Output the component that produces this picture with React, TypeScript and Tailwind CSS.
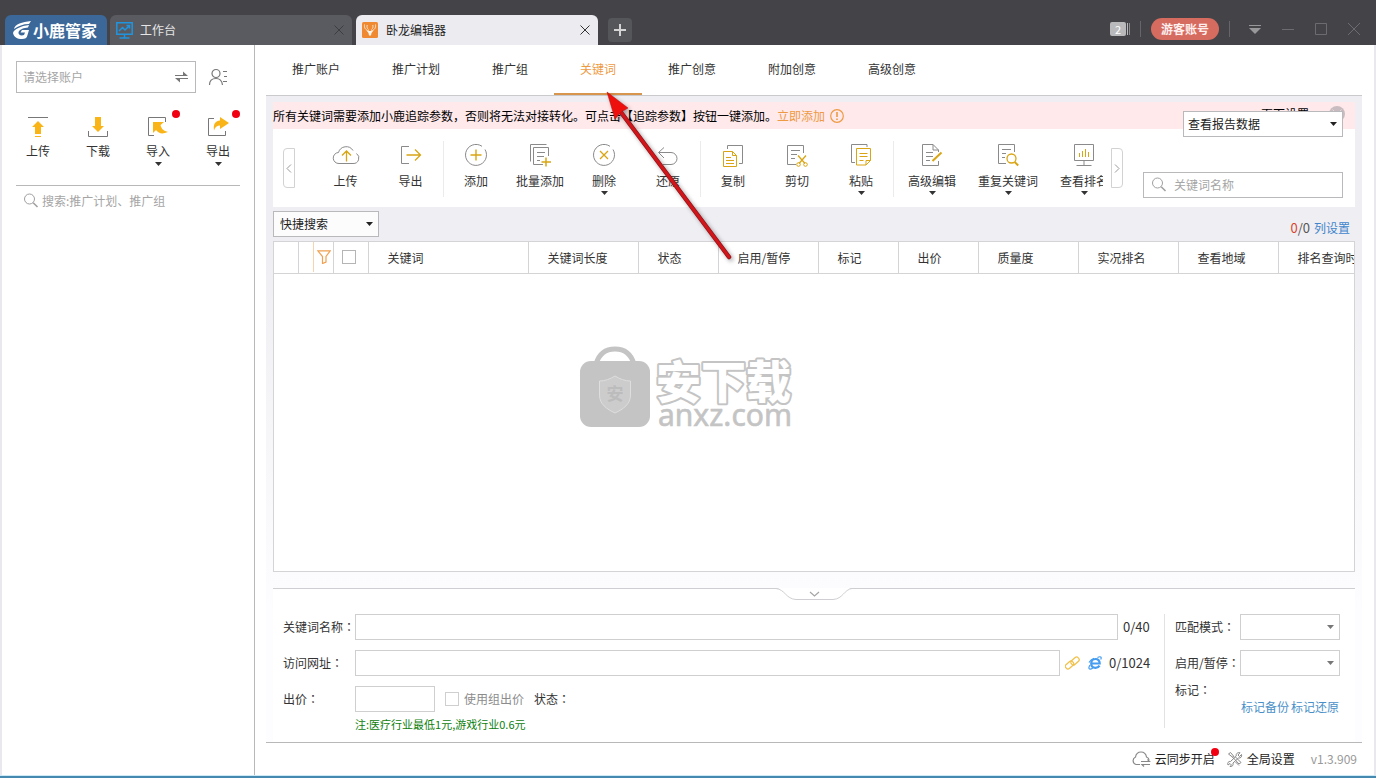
import type { ReactNode } from 'react'
import { useState } from 'react'

const GREY = '#8a8a8a'
const GOLD = '#d9a514'
const AMBER = '#f9b418'

interface ToolItem {
  label: string
  icon: ReactNode
  menu?: boolean
  wide?: boolean
}

const navTabs = ['推广账户', '推广计划', '推广组', '关键词', '推广创意', '附加创意', '高级创意']

const columns = [
  { label: '关键词', width: 'w-[160px]' },
  { label: '关键词长度', width: 'w-[110px]' },
  { label: '状态', width: 'w-20' },
  { label: '启用/暂停', width: 'w-[100px]' },
  { label: '标记', width: 'w-20' },
  { label: '出价', width: 'w-20' },
  { label: '质量度', width: 'w-[100px]' },
  { label: '实况排名', width: 'w-[100px]' },
  { label: '查看地域', width: 'w-[100px]' },
  { label: '排名查询时间', width: 'w-auto' },
]

function Caret({ className = '' }: { className?: string }) {
  return (
    <svg className={className} width="7" height="4" viewBox="0 0 7 4" aria-hidden="true">
      <path d="M0 0h7L3.5 4z" fill="currentColor" />
    </svg>
  )
}

// the JP face centres the full-width colon in its cell
function Colon() {
  return <span className="font-['Noto_Sans_CJK_JP',sans-serif]">：</span>
}

function Icon({ children }: { children: ReactNode }) {
  return (
    <svg width="28" height="24" viewBox="0 0 28 24" fill="none" stroke={GREY} aria-hidden="true">
      {children}
    </svg>
  )
}

function SearchIcon() {
  return (
    <svg width="16" height="16" viewBox="0 0 16 16" fill="none" stroke="#a0a0a0" aria-hidden="true">
      <circle cx="6.5" cy="6" r="5" />
      <path d="M10.2 9.8l4.3 4.2" strokeWidth="1.6" />
    </svg>
  )
}

function CloseIcon({ color }: { color: string }) {
  return (
    <svg width="10" height="10" viewBox="0 0 10 10" stroke={color} aria-hidden="true">
      <path d="M.5.5l9 9M9.5.5l-9 9" />
    </svg>
  )
}

const toolGroups: ToolItem[][] = [
  [
    {
      label: '上传',
      icon: (
        <Icon>
          <path d="M7 20.5h14a5.5 5.5 0 0 0 3.5-10M21 7.5A8 8 0 0 0 6.5 9.5 5.5 5.5 0 0 0 7 20.5" />
          <path d="M14.5 18.5V8M10 12.5L14.5 8l4.5 4.5" stroke={GOLD} strokeWidth="1.3" />
        </Icon>
      ),
    },
    {
      label: '导出',
      icon: (
        <Icon>
          <path d="M12 3.5H4.5v17H12" />
          <path d="M9.5 12H23M18 6.5l5.5 5.5-5.5 5.5" stroke={GOLD} strokeWidth="1.3" />
        </Icon>
      ),
    },
  ],
  [
    {
      label: '添加',
      icon: (
        <Icon>
          <path d="M20 3.3A10.5 10.5 0 1 0 23 6.5" />
          <path d="M14 6.5v11M8.5 12h11" stroke={GOLD} strokeWidth="1.4" />
        </Icon>
      ),
    },
    {
      label: '批量添加',
      icon: (
        <Icon>
          <path d="M4.5 18.5v-17h16" />
          <path d="M22.5 13V4.5h-15v17H17" />
          <path d="M11 9.5h8M11 13.5h7M11 17.5h3" />
          <path d="M20 14.5v9M15.5 19H25" stroke={GOLD} strokeWidth="1.5" />
        </Icon>
      ),
    },
    {
      label: '删除',
      menu: true,
      icon: (
        <Icon>
          <path d="M20 3.3A10.5 10.5 0 1 0 23 6.5" />
          <path d="M10 8l8 8M18 8l-8 8" stroke={GOLD} strokeWidth="1.3" />
        </Icon>
      ),
    },
    {
      label: '还原',
      icon: (
        <Icon>
          <path d="M10 4.5L4.5 9.5 10 15M5 9.5h12a6 6 0 0 1 0 12H9" />
        </Icon>
      ),
    },
  ],
  [
    {
      label: '复制',
      icon: (
        <Icon>
          <path d="M8.5 6V2.5h15v18H20" />
          <path d="M4.5 8.5h9l4 4v11h-13zM13.5 8.5v4h4M7 14.5h5M7 17.5h8M7 20.5h8" stroke={GOLD} />
        </Icon>
      ),
    },
    {
      label: '剪切',
      icon: (
        <Icon>
          <path d="M20.5 10V2.5h-16v19H13" />
          <path d="M8 7.5h9M8 11.5h6M8 15.5h4" />
          <path d="M15 12.5l7 8M23 12.5l-7 8" stroke={GOLD} strokeWidth="1.3" />
          <circle cx="15.5" cy="21.5" r="1.8" stroke={GOLD} />
          <circle cx="22.5" cy="21.5" r="1.8" stroke={GOLD} />
        </Icon>
      ),
    },
    {
      label: '粘贴',
      menu: true,
      icon: (
        <Icon>
          <path d="M20 4V1.5H4.5v18H8" />
          <path d="M9.5 5.5h14v12l-4.5 4.5H9.5zM23.5 17.5H19v4.5M12.5 10.5h8M12.5 13.5h8M12.5 17.5h4" stroke={GOLD} />
        </Icon>
      ),
    },
  ],
  [
    {
      label: '高级编辑',
      menu: true,
      wide: true,
      icon: (
        <Icon>
          <path d="M20.5 18v4.5h-16v-21H15l5.5 5.5v2M15 1.5V7h5.5M8 9.5h7M8 13.5h7M8 17.5h4" />
          <path d="M14.5 18l9-8.5" stroke={GOLD} strokeWidth="2" />
        </Icon>
      ),
    },
    {
      label: '重复关键词',
      menu: true,
      wide: true,
      icon: (
        <Icon>
          <path d="M20.5 9V1.5h-16v19H12M8 6.5h9M8 10.5h4M8 14.5h3" />
          <circle cx="17.5" cy="15.5" r="4.5" stroke={GOLD} strokeWidth="1.3" />
          <path d="M20.7 19l3.5 3.5" stroke={GOLD} strokeWidth="2" />
        </Icon>
      ),
    },
    {
      label: '查看排名',
      menu: true,
      wide: true,
      icon: (
        <Icon>
          <path d="M4.5 1.5h19v16h-19zM14 17.5V22M6.5 22.5h15" />
          <path d="M9.5 14v-4M12.5 14V8M15.5 14V6M18.5 14V9" stroke={GOLD} />
        </Icon>
      ),
    },
  ],
]

const sideTools = [
  {
    label: '上传',
    icon: (
      <>
        <path d="M2 1.5h20" stroke="#777" />
        <path d="M12 5l6 6h-3v7H9v-7H6z" fill={AMBER} />
        <path d="M9 20.5h6" stroke={AMBER} />
      </>
    ),
  },
  {
    label: '下载',
    icon: (
      <>
        <path d="M2.5 15v5.5h19V15" stroke="#777" />
        <path d="M12 16l6-6h-3V1H9v9H6z" fill={AMBER} />
      </>
    ),
  },
  {
    label: '导入',
    menu: true,
    icon: (
      <>
        <path d="M19.5 6V1.5h-17v18H8" stroke="#777" />
        <path d="M7 6h11l-3.5 3c1 4.5 3.5 6 7.5 7-6 2.5-9 1.5-12-2L7 17z" fill={AMBER} />
      </>
    ),
  },
  {
    label: '导出',
    menu: true,
    icon: (
      <>
        <path d="M8 2.5H2.5v17h17V15" stroke="#777" />
        <path d="M14 1l9 6-9 6V9.5c-3 0-5 1.5-6 5-1-6 1-9.5 6-10z" fill={AMBER} />
      </>
    ),
  },
]

function TitleBar() {
  return (
    <header className="flex h-[45px] shrink-0 items-end bg-[#444448] pl-[5px]">
      <div className="flex h-[30px] w-[102px] items-center gap-0.5 rounded-t-md bg-[#3b6899] pl-2 text-white">
        <svg width="18" height="18" viewBox="0 0 18 18" aria-hidden="true">
          <path d="M18 0C9 1 2 3 1 8c4-3 9-5 15-5zM16 4C8 5 1 8 0 12c1 4 4 6 9 6 3 0 5-1 5.5-4l1.5-5H9l-1.5 2.5H12L11 14c-3 1-6 0-5.5-3C7 8 11 7 15 6.5z" fill="currentColor" />
        </svg>
        <span className="text-base leading-5 font-bold">小鹿管家</span>
      </div>
      <div className="ml-[3px] flex h-[30px] w-[242px] items-center rounded-t-md bg-[#5a5b60] pr-2 pl-1.5 text-[#e6e6e6]">
        <svg width="17" height="17" viewBox="0 0 17 17" fill="none" stroke="#1f95e0" aria-hidden="true">
          <path d="M.8.8h15.4v11.4H.8z" strokeWidth="1.5" />
          <path d="M3 9l3.5-3.5L9 8l4.5-4.5M10.5 3.5h3v3M8.5 12v3.5M3.5 16h10" strokeWidth="1.5" />
        </svg>
        <span className="ml-[7px] flex-1">工作台</span>
        <button type="button" aria-label="关闭 工作台">
          <CloseIcon color="#3d3d40" />
        </button>
      </div>
      <div className="ml-1 flex h-[30px] w-[242px] items-center rounded-t-md bg-[#ebebf0] pr-2 pl-1.5 text-[#222]">
        <svg width="16" height="16" viewBox="0 0 16 16" aria-hidden="true">
          <rect width="16" height="16" rx="1.5" fill="#f08a32" />
          <path d="M2.5 2.5c-.5 3.5 1 5.5 4.5 6.5M13.5 2.5c.5 3.5-1 5.5-4.5 6.5M5.2 3c-.5 2 0 3.5 1.3 4.5M10.8 3c.5 2 0 3.5-1.3 4.5" fill="none" stroke="#fde3cb" />
          <path d="M4.5 8.500l3 .5h1l3-.5-2 2.500L9 13.500H7L6.500 11z" fill="#fff4e8" />
        </svg>
        <span className="ml-2 flex-1">卧龙编辑器</span>
        <button type="button" aria-label="关闭 卧龙编辑器">
          <CloseIcon color="#333333" />
        </button>
      </div>
      <button type="button" aria-label="新建标签" className="mb-[3px] ml-2.5 flex size-6 items-center justify-center rounded-sm bg-[#55565a]">
        <svg width="12" height="12" viewBox="0 0 12 12" stroke="#d4d4d4" strokeWidth="2" aria-hidden="true">
          <path d="M6 0v12M0 6h12" />
        </svg>
      </button>

      <div className="mb-[5px] ml-auto flex h-[22px] items-center pr-[15px]">
        <button type="button" className="flex items-center gap-px">
          <span className="flex h-3.5 w-4 items-center justify-center rounded-[2px] bg-[#b9b9bb] text-[11px] text-white">2</span>
          <span className="h-3 w-px bg-[#b9b9bb]" />
          <span className="h-3 w-px bg-[#8e8e90]" />
        </button>
        <span className="mx-2.5 h-4 w-px bg-[#66666a]" />
        <button type="button" className="h-[22px] rounded-full bg-[#d66b5f] px-2.5 font-bold text-[#fff0ee]">
          游客账号
        </button>
        <span className="mx-2.5 h-4 w-px bg-[#66666a]" />
        <div className="ml-2 flex items-center gap-[19px]">
          <button type="button" aria-label="菜单">
            <svg width="14" height="14" viewBox="0 0 14 14" aria-hidden="true">
              <path d="M1 3.5h12" stroke="#98989b" />
              <path d="M1 6h12l-6 6z" fill="#98989b" />
            </svg>
          </button>
          <button type="button" aria-label="最小化">
            <svg width="14" height="14" viewBox="0 0 14 14" stroke="#6c6c70" aria-hidden="true">
              <path d="M1 7.5h12" />
            </svg>
          </button>
          <button type="button" aria-label="最大化">
            <svg width="14" height="14" viewBox="0 0 14 14" fill="none" stroke="#6c6c70" aria-hidden="true">
              <path d="M1.5 1.5h11v11h-11z" />
            </svg>
          </button>
          <button type="button" aria-label="关闭">
            <svg width="14" height="14" viewBox="0 0 14 14" stroke="#6c6c70" aria-hidden="true">
              <path d="M1 1l12 12M13 1L1 13" />
            </svg>
          </button>
        </div>
      </div>
    </header>
  )
}

function Sidebar() {
  return (
    <aside className="w-[253px] shrink-0 border-r border-[#b8b8b8] bg-white px-3.5 pt-4">
      <div className="flex items-center">
        <div className="flex h-8 w-[180px] items-center border border-[#b9b9bb] pr-[7px] pl-1.5">
          <input aria-label="账户" placeholder="请选择账户" className="min-w-0 flex-1 outline-none placeholder:text-[#a5a5a5]" />
          <button type="button" aria-label="切换账户">
            <svg width="13" height="12" viewBox="0 0 13 12" aria-hidden="true">
              <path d="M0 4.5h12M1 7.5h12" stroke="#777" />
              <path d="M8 .5l5 4.5H8zM5 11.5L0 7h5z" fill="#777" />
            </svg>
          </button>
        </div>
        <button type="button" aria-label="账户列表" className="ml-3">
          <svg width="20" height="18" viewBox="0 0 20 18" fill="none" stroke="#777" strokeWidth="1.2" aria-hidden="true">
            <circle cx="8" cy="5.5" r="4" />
            <path d="M1.5 17c0-4 2.5-6.5 6.5-6.5s6 2.5 6.5 6.5M15 3.5h4M16 8.5h3M15 13.5h4" />
          </svg>
        </button>
      </div>
      <div className="mt-[23px] flex h-[70px] border-b border-[#b8b8b8]">
        <div className="-mx-2 flex">
          {sideTools.map((tool) => (
            <button key={tool.label} type="button" className="relative flex w-[60px] shrink-0 flex-col items-center text-[#333]">
              <svg width="24" height="22" viewBox="0 0 24 22" fill="none" aria-hidden="true">
                {tool.icon}
              </svg>
              <span className="mt-[5px]">{tool.label}</span>
              {tool.menu && (
                <>
                  <Caret className="mt-[3px]" />
                  <span className="absolute -top-1.5 right-2 size-2 rounded-full bg-[#f00010]" />
                </>
              )}
            </button>
          ))}
        </div>
      </div>
      <label className="flex h-[30px] items-center gap-[3px] pl-[7px]">
        <SearchIcon />
        <input aria-label="搜索" placeholder="搜索:推广计划、推广组" className="min-w-0 flex-1 outline-none placeholder:text-[#a5a5a5]" />
      </label>
    </aside>
  )
}

function Banner() {
  return (
    <div className="flex h-[27px] items-center bg-[#ffe9eb] text-black">
      <span>所有关键词需要添加小鹿追踪参数，否则将无法对接转化。可点击【追踪参数】按钮一键添加。</span>
      <a href="#" className="text-[#ee9a43]">立即添加</a>
      <svg className="ml-[5px]" width="14" height="14" viewBox="0 0 14 14" fill="none" stroke="#ee9a43" aria-hidden="true">
        <circle cx="7" cy="7" r="6.3" strokeWidth="1.2" />
        <path d="M7 3v5M7 9.5v1.5" strokeWidth="1.6" />
      </svg>
      <span className="mt-1 ml-auto self-start">页面设置</span>
      <button type="button" aria-label="关闭提示" className="mt-1 mr-2.5 ml-5 flex size-4 items-center justify-center self-start rounded-full bg-[#c9bcc0]">
        <CloseIcon color="#e4dadd" />
      </button>
    </div>
  )
}

function Toolbar() {
  return (
    <div className="relative flex h-[78px] items-start bg-white pr-3 pl-2.5">
      <button type="button" aria-label="向左" className="mt-[19px] flex h-10 w-3 shrink-0 items-center justify-center rounded-l border border-[#d2d2d2]">
        <svg width="6" height="9" viewBox="0 0 6 9" fill="none" stroke="#999" aria-hidden="true">
          <path d="M5 .5l-4 4 4 4" />
        </svg>
      </button>
      <div className="flex h-[78px] min-w-0 flex-1 overflow-hidden pl-[18px]">
        {toolGroups.map((group, index) => (
          <div key={group[0].label} className="flex shrink-0">
            {index > 0 && <span className="mt-3 h-14 w-px bg-[#ebebeb]" />}
            {group.map((item) => (
              <button
                key={item.label}
                type="button"
                className={`flex shrink-0 flex-col items-center pt-3.5 text-[#333] ${
                  item.wide ? 'w-[76px]' : index === 0 ? 'w-[65px]' : 'w-16'
                }`}
              >
                {item.icon}
                <span className="mt-1.5">{item.label}</span>
                {item.menu && <Caret className="mt-0.5" />}
              </button>
            ))}
          </div>
        ))}
      </div>
      <button type="button" aria-label="向右" className="mt-[19px] ml-2 flex h-10 w-3 shrink-0 items-center justify-center rounded-r border border-[#d2d2d2]">
        <svg width="6" height="9" viewBox="0 0 6 9" fill="none" stroke="#999" aria-hidden="true">
          <path d="M1 .5l4 4-4 4" />
        </svg>
      </button>
      <label className="mt-[43px] ml-5 flex h-[26px] w-[200px] shrink-0 items-center gap-[7px] border border-[#b9b9bb] pl-[7px]">
        <SearchIcon />
        <input aria-label="关键词名称搜索" placeholder="关键词名称" className="min-w-0 flex-1 outline-none placeholder:text-[#a5a5a5]" />
      </label>
      {/* report picker floats over the banner edge */}
      <div className="absolute -top-[18px] right-3 h-[26px] w-40">
        <select aria-label="查看报告数据" className="size-full appearance-none border border-[#b9b9bb] bg-white pl-1 text-[#222]">
          <option>查看报告数据</option>
        </select>
        <Caret className="pointer-events-none absolute top-[11px] right-1.5 text-[#222]" />
      </div>
    </div>
  )
}

function Watermark() {
  return (
    <svg className="pointer-events-none absolute top-[104px] left-[305px]" width="222" height="92" viewBox="0 0 222 92" aria-hidden="true">
      <path d="M17 18c3-10 10-15 19-15s16 5 19 15" fill="none" stroke="#c4c4c4" strokeWidth="5" />
      <rect x="1" y="15" width="70" height="66" rx="11" fill="#c4c4c4" />
      <path d="M36 30c5 3 10 5 15.5 5v14c0 9-7 14-15.5 18-8.500-4-15.500-9-15.500-18V35C26 35 31 33 36 30z" fill="#cccccc" stroke="#dedede" />
      <text x="36" y="54" fontSize="17" fontWeight="700" textAnchor="middle" fill="#bcbcbc">安</text>
      <text x="77" y="53" fontSize="45" fontWeight="900" fill="#ffffff" stroke="#c4c4c4" strokeWidth="4" strokeLinejoin="round" paintOrder="stroke">
        安下载
      </text>
      <text x="79" y="80" fontSize="30" fill="#c4c4c4" stroke="#c4c4c4" strokeWidth="0.6" fontFamily="Noto Sans">anxz.com</text>
    </svg>
  )
}

function KeywordTable() {
  return (
    <div className="relative min-h-60 flex-1 overflow-hidden border border-[#d4d4d6] bg-white">
      <table className="w-full table-fixed border-collapse">
        <thead>
          <tr className="h-[31px] border-b border-[#d4d4d6] text-left">
            <th className="w-6 border-r border-[#d4d4d6]" />
            <th className="w-[35px] border-r border-[#d4d4d6]">
              <button type="button" aria-label="筛选" className="ml-3.5 flex h-[30px] items-center border-l border-[#f8d3b0] pl-[3px]">
                <svg width="14" height="14" viewBox="0 0 14 14" fill="none" stroke="#f0a050" strokeWidth="1.2" aria-hidden="true">
                  <path d="M.8.8h12.4L9 6.500v5.5L5.5 13.5v-7z" />
                </svg>
              </button>
            </th>
            <th className="w-[35px] border-r border-[#d4d4d6]">
              <input type="checkbox" aria-label="全选" className="ml-2 block size-3.5 appearance-none border border-[#b5b5b5] bg-white" />
            </th>
            {columns.map((column) => (
              <th key={column.label} className={`${column.width} overflow-hidden border-r border-[#d4d4d6] pt-px pl-[19px] font-normal whitespace-nowrap text-[#333] last:border-r-0`}>
                {column.label}
              </th>
            ))}
          </tr>
        </thead>
        <tbody />
      </table>
      <Watermark />
    </div>
  )
}

function FormSelect({ id }: { id: string }) {
  return (
    <div className="relative h-[26px] w-[100px]">
      <select id={id} className="size-full appearance-none border border-[#cfcfcf] bg-white">
        <option />
      </select>
      <Caret className="pointer-events-none absolute top-[11px] right-1.5 text-[#777]" />
    </div>
  )
}

function DetailForm() {
  return (
    <form className="relative flex h-[154px] border-t border-[#d0ced2] bg-white pt-[25px] text-[#333]">
      <button type="button" aria-label="收起" className="absolute -top-px left-1/2 -translate-x-1/2">
        <svg width="76" height="13" viewBox="0 0 76 13" fill="none" aria-hidden="true">
          <path d="M0 0c9 1 10 11 20 11.5h37C67 11 68 1 76 0z" fill="#fff" />
          <path d="M0 .5c9 1 10 10.5 20 11h37C67 11 68 1.5 76 .5" stroke="#d0ced2" />
          <path d="M34 4l4.5 4L43 4" stroke="#a5a5a5" strokeWidth="1.2" />
        </svg>
      </button>
      <div className="flex min-w-0 flex-1 flex-col pl-2.5">
        <div className="flex h-[26px] items-center">
          <label htmlFor="keyword" className="w-[72px] shrink-0 whitespace-nowrap">
            关键词名称
            <Colon />
          </label>
          <input id="keyword" className="h-[26px] min-w-0 flex-1 border border-[#cfcfcf] px-1" />
          <span className="w-[33px] shrink-0 pl-[5px] text-[13px]">0/40</span>
        </div>
        <div className="mt-2.5 flex h-[26px] items-center">
          <label htmlFor="url" className="w-[72px] shrink-0 whitespace-nowrap">
            访问网址
            <Colon />
          </label>
          <input id="url" className="h-[26px] min-w-0 flex-1 border border-[#cfcfcf] px-1" />
          <svg className="ml-[5px] shrink-0" width="15" height="14" viewBox="0 0 15 14" fill="none" stroke="#f0c24b" strokeWidth="1.3" aria-hidden="true">
            <rect x="5.5" y="2.5" width="9" height="5" rx="2" transform="rotate(-42 10 5)" />
            <rect x="0" y="6.5" width="9" height="5" rx="2" transform="rotate(-42 4.5 9)" />
          </svg>
          <svg className="ml-2 shrink-0" width="14" height="14" viewBox="0 0 14 14" fill="none" stroke="#459cf0" aria-hidden="true">
            <path d="M3 7.5h8.7C11.7 4.7 10 3 7.5 3S3.2 4.9 3.2 7.5s1.8 4.3 4.3 4.3c1.8 0 3.2-.8 4-2.2" strokeWidth="2.2" />
            <path d="M9.5 1.5c3-1.5 4.5-.5 3.2 2M2 9c-2.2 3.5-1 5.2 2.8 3.2M1 6.5C2.5 4 4 3 6 2.3" strokeWidth="1.2" />
          </svg>
          <span className="w-[49px] shrink-0 pl-[7px] text-[13px]">0/1024</span>
        </div>
        <div className="mt-2.5 flex h-[26px] items-center">
          <label htmlFor="bid" className="w-[72px] whitespace-nowrap">
            出价
            <Colon />
          </label>
          <input id="bid" className="h-[26px] w-20 border border-[#cfcfcf] px-1" />
          <input id="group-bid" type="checkbox" className="ml-2.5 size-3.5 appearance-none border border-[#cfcfcf] bg-white" />
          <label htmlFor="group-bid" className="ml-[5px] text-[#8c8c8c]">使用组出价</label>
          <span className="ml-2.5">
            状态
            <Colon />
          </span>
        </div>
        <p className="mt-1 ml-[72px] text-[11px] text-[#0c800c]">注:医疗行业最低1元,游戏行业0.6元</p>
      </div>
      <div className="ml-[13px] h-[114px] w-[191px] shrink-0 border-l border-[#e2e2e2] pl-2.5">
        <div className="flex h-[26px] items-center">
          <label htmlFor="match" className="w-[65px] whitespace-nowrap">
            匹配模式
            <Colon />
          </label>
          <FormSelect id="match" />
        </div>
        <div className="mt-2.5 flex h-[26px] items-center">
          <label htmlFor="enabled" className="w-[65px] whitespace-nowrap">
            启用/暂停
            <Colon />
          </label>
          <FormSelect id="enabled" />
        </div>
        <p className="mt-1.5">
          标记
          <Colon />
        </p>
        <div className="mt-px flex gap-0.5 pl-[66px] whitespace-nowrap text-[#4a90c8]">
          <a href="#">标记备份</a>
          <a href="#">标记还原</a>
        </div>
      </div>
    </form>
  )
}

function StatusBar() {
  return (
    <footer className="flex h-[33px] shrink-0 items-center justify-end border-t border-[#b8b8b8] pr-[5px] text-[#222]">
      <button type="button" className="relative flex items-center gap-1">
        <svg width="20" height="16" viewBox="0 0 20 16" fill="none" stroke="#888" strokeWidth="1.2" aria-hidden="true">
          <path d="M9 13.5H5a4 4 0 0 1-.5-7.5C5 3 7 1 10 1s5 2 5.5 5c1.5.5 2.5 1.5 2.5 3" />
          <path d="M10 10.5h8.5L16.5 8.500M19 13.5h-8l2 2" />
        </svg>
        <span>云同步开启</span>
        <span className="absolute -top-[3px] -right-1 size-2 rounded-full bg-[#f00010]" />
      </button>
      <button type="button" className="ml-3 flex items-center gap-1">
        <svg width="16" height="16" viewBox="0 0 16 16" fill="none" stroke="#888" aria-hidden="true">
          <path d="M1.5 3l2-1.5 3 3.5-.5 1.5 6 6.5 2-1.5-6-6M6 6.5L1.5 3M8.5 11L12 14.5" />
          <path d="M14.5 3.5L12.5 5.5 11 4l2-2.3c-2-.7-4.5 1-3.7 3.3L3.5 10.5c-2-.5-3.5 1.5-2.5 3.5l2-1.5 1.5 1.5-1.5 1.5c2.5.5 3.5-1.5 3-3.5L11.5 7c2 .5 3.8-1.5 3-3.5z" />
        </svg>
        <span>全局设置</span>
      </button>
      <span className="ml-4 text-[#999]">v1.3.909</span>
    </footer>
  )
}

export default function App() {
  const [activeTab, setActiveTab] = useState('关键词')

  return (
    <div className="relative flex min-h-screen flex-col bg-white font-['Noto_Sans_CJK_SC','Noto_Sans',sans-serif] text-xs leading-4">
      <TitleBar />
      <div className="flex flex-1 border-x-2 border-[#e8e8ee]">
        <Sidebar />
        <main className="flex min-w-0 flex-1 flex-col pr-3 pl-[11px]">
          <nav className="flex h-[51px] shrink-0 border-b border-[#cacacc]">
            {navTabs.map((tab) => (
              <button
                key={tab}
                type="button"
                className={`border-b-2 px-[26px] ${
                  tab === activeTab ? 'border-[#d8954e] text-[#ee9a43]' : 'border-transparent text-[#333]'
                }`}
                onClick={() => setActiveTab(tab)}
              >
                {tab}
              </button>
            ))}
          </nav>
          <div className="flex flex-1 flex-col bg-linear-to-b from-[#efeef2] from-25% to-[#fdfcfe] to-80% px-[7px] pt-1.5">
            <Banner />
            <Toolbar />
            <div className="flex h-[34px] shrink-0 items-center justify-between pr-[5px]">
              <div className="relative h-[26px] w-[106px]">
                <select aria-label="快捷搜索" className="size-full appearance-none border border-[#b9b9bb] bg-[#fcfcfd] pl-1.5 text-[#222]">
                  <option>快捷搜索</option>
                </select>
                <Caret className="pointer-events-none absolute top-[11px] right-1.5 text-[#222]" />
              </div>
              <div className="flex gap-1 pt-2">
                <span className="text-[13px] text-[#555]">
                  <span className="text-[#d8452e]">0</span>/0
                </span>
                <a href="#" className="text-[#3f86cc]">列设置</a>
              </div>
            </div>
            <KeywordTable />
            <div className="mt-4">
              <DetailForm />
            </div>
          </div>
          <StatusBar />
        </main>
      </div>
      <div className="h-[3px] shrink-0 border-t border-b-2 border-t-[#cdeaf6] border-b-[#4588b0]" />
      {/* pointer from the status column up to the keyword tab */}
      <svg className="pointer-events-none absolute top-[85px] left-[600px] drop-shadow-[2px_2px_2px_rgba(0,0,0,0.35)]" width="140" height="180" viewBox="0 0 140 180" aria-hidden="true">
        <path d="M20 26L129 172" stroke="#8e1216" strokeWidth="4.5" strokeLinecap="round" />
        <path d="M20 26L129 172" stroke="#d0161b" strokeWidth="3" strokeLinecap="round" />
        <path d="M7 7l21 16-7 4-6 7z" fill="#ee100d" stroke="#b01010" strokeWidth="0.5" />
      </svg>
    </div>
  )
}
